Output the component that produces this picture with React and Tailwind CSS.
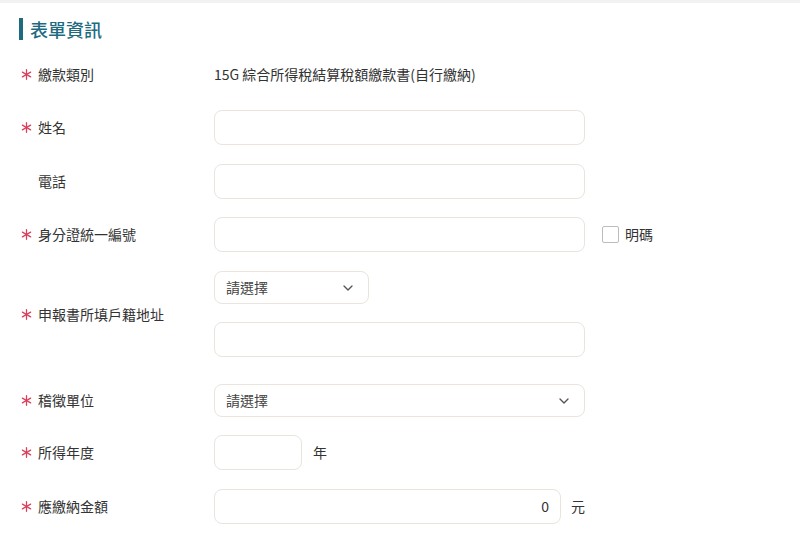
import React from 'react'
import { ChevronDown } from 'lucide-react'

const font = { fontFamily: '"Noto Sans CJK TC", "Noto Sans", sans-serif' }

const Star = () => (
    <svg width="11" height="11" viewBox="0 0 12 12" className='shrink-0'>
        <g stroke="#d9415c" strokeWidth="1.4" strokeLinecap="round">
            <line x1="6" y1="0.8" x2="6" y2="11.2" />
            <line x1="1.5" y1="3.4" x2="10.5" y2="8.6" />
            <line x1="1.5" y1="8.6" x2="10.5" y2="3.4" />
        </g>
    </svg>
)

const Label = ({ text, required = true }) => (
    <div className='w-[214px] shrink-0 flex items-center pl-[21px] text-[14px] text-[#333]'>
        <span className='w-[17px] flex items-center'>{required && <Star />}</span>
        <span>{text}</span>
    </div>
)

const Input = ({ className = '', children }) => (
    <div className={`h-[35px] border border-[#e9e5dd] rounded-[8px] bg-white flex items-center ${className}`}>
        {children}
    </div>
)

const Select = ({ className = '' }) => (
    <div className={`h-[33px] border border-[#e9e5dd] rounded-[8px] bg-white flex items-center justify-between pl-[11px] pr-[12px] text-[14px] text-[#444] ${className}`}>
        <span>請選擇</span>
        <ChevronDown size={16} strokeWidth={2} className='text-[#555]' />
    </div>
)

const App = () => {
    return (
        <div className='w-[800px] h-[537px] bg-white overflow-hidden' style={font}>
            <div className='h-[3px] bg-[#f2f2f2]' />

            <div className='flex items-center mt-[15px] pl-[19px]'>
                <div className='w-[4px] h-[22px] bg-[#1e6b80]' />
                <h2 className='ml-[7px] text-[18px] font-medium text-[#1e6b80] leading-[22px]'>表單資訊</h2>
            </div>

            <div className='flex items-center h-[35px] mt-[17px]'>
                <Label text='繳款類別' />
                <span className='text-[14px] text-[#333]'>15G 綜合所得稅結算稅額繳款書(自行繳納)</span>
            </div>

            <div className='flex items-center mt-[18px]'>
                <Label text='姓名' />
                <Input className='w-[371px]' />
            </div>

            <div className='flex items-center mt-[19px]'>
                <Label text='電話' required={false} />
                <Input className='w-[371px]' />
            </div>

            <div className='flex items-center mt-[18px]'>
                <Label text='身分證統一編號' />
                <Input className='w-[371px]' />
                <label className='flex items-center ml-[17px] text-[14px] text-[#333]'>
                    <span className='w-[17px] h-[17px] border border-[#bdbdbd] rounded-[2px] bg-white' />
                    <span className='ml-[6px]'>明碼</span>
                </label>
            </div>

            <div className='flex items-center mt-[19px]'>
                <Label text='申報書所填戶籍地址' />
                <div className='flex flex-col gap-[18px]'>
                    <Select className='w-[155px]' />
                    <Input className='w-[371px]' />
                </div>
            </div>

            <div className='flex items-center mt-[27px]'>
                <Label text='稽徵單位' />
                <Select className='w-[371px]' />
            </div>

            <div className='flex items-center mt-[18px]'>
                <Label text='所得年度' />
                <Input className='w-[88px]' />
                <span className='ml-[11px] text-[14px] text-[#333]'>年</span>
            </div>

            <div className='flex items-center mt-[19px]'>
                <Label text='應繳納金額' />
                <Input className='w-[347px] justify-end pr-[11px]'>
                    <span className='text-[14px] text-[#333]'>0</span>
                </Input>
                <span className='ml-[10px] text-[14px] text-[#333]'>元</span>
            </div>
        </div>
    )
}

export default App
